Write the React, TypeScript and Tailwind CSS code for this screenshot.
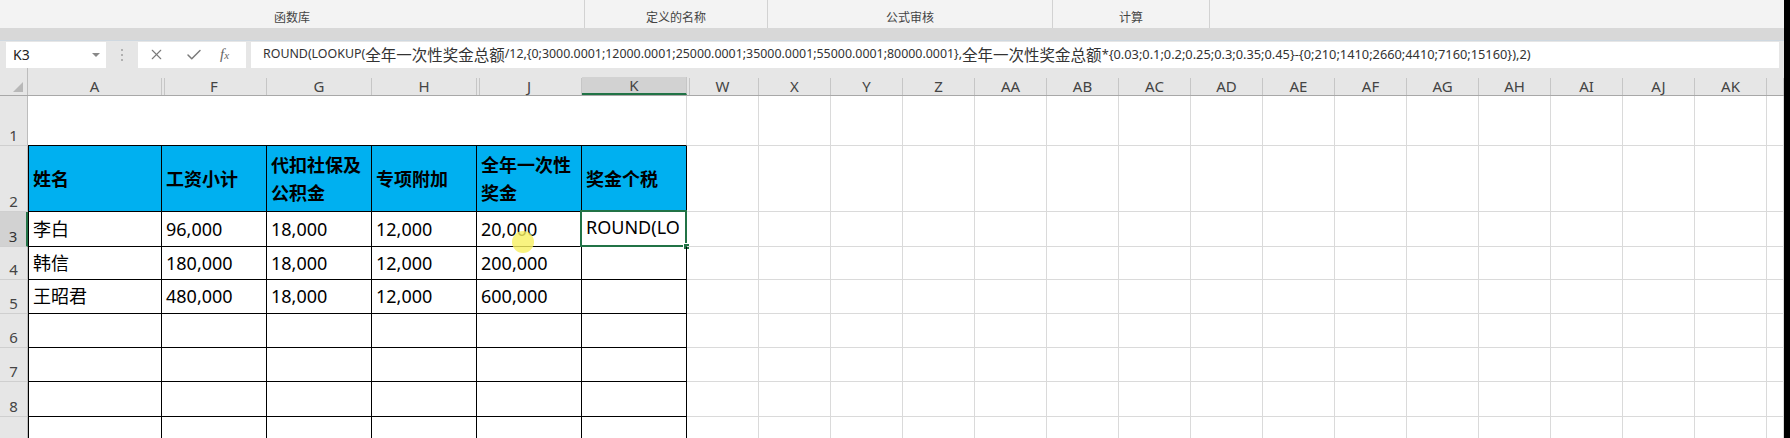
import React from 'react';
import { X, Check } from 'lucide-react';

type Col = { n: string; w: number; t: boolean; hiddenBefore?: boolean };

const cols: Col[] = [
  { n: 'A', w: 134, t: true },
  { n: 'F', w: 105, t: true, hiddenBefore: true },
  { n: 'G', w: 105, t: true },
  { n: 'H', w: 105, t: true },
  { n: 'J', w: 105, t: true, hiddenBefore: true },
  { n: 'K', w: 105, t: true },
  ...['W', 'X', 'Y', 'Z', 'AA', 'AB', 'AC', 'AD', 'AE', 'AF', 'AG', 'AH', 'AI', 'AJ', 'AK'].map((n, i) => ({
    n,
    w: 72,
    t: false,
    hiddenBefore: i === 0,
  })),
  { n: '', w: 17, t: false },
];

const headers: React.ReactNode[] = [
  '姓名',
  '工资小计',
  <>代扣社保及<br />公积金</>,
  '专项附加',
  <>全年一次性<br />奖金</>,
  '奖金个税',
];

const data: string[][] = [
  ['李白', '96,000', '18,000', '12,000', '20,000', ''],
  ['韩信', '180,000', '18,000', '12,000', '200,000', ''],
  ['王昭君', '480,000', '18,000', '12,000', '600,000', ''],
];

// row 9 is only partly in view, its number is below the edge
const rows = [
  { n: 1, h: 50 },
  { n: 2, h: 66 },
  { n: 3, h: 35 },
  { n: 4, h: 33 },
  { n: 5, h: 34 },
  { n: 6, h: 34 },
  { n: 7, h: 34 },
  { n: 8, h: 35 },
  { n: 9, h: 34 },
];

const formula: [string, string][] = [
  ['l', 'ROUND(LOOKUP('],
  ['c', '全年一次性奖金总额'],
  ['l', '/12,{0;3000.0001;12000.0001;25000.0001;35000.0001;55000.0001;80000.0001},'],
  ['c', '全年一次性奖金总额'],
  ['e', '*{0.03;0.1;0.2;0.25;0.3;0.35;0.45}-{0;210;1410;2660;4410;7160;15160}),2)'],
];

const groups = [
  { label: '函数库', w: 585 },
  { label: '定义的名称', w: 183 },
  { label: '公式审核', w: 285 },
  { label: '计算', w: 157 },
];

function Cell({ r, ci, col }: { r: number; ci: number; col: Col }) {
  let cls = 'border-r border-b border-[#dadada]';
  let content: React.ReactNode = null;
  if (col.t && r === 1) {
    cls = ci === 5 ? 'border-b border-b-black border-r border-r-[#dadada]' : 'border-b border-b-black';
  } else if (col.t && r >= 2) {
    cls = 'border-r border-b border-black' + (ci === 0 ? ' border-l' : '');
  }
  if (col.t && r === 2) {
    cls += ' bg-[#00b0f0] font-bold leading-[28px] items-center';
    content = headers[ci];
  } else if (col.t && r >= 3 && r <= 5) {
    cls += ' items-center';
    content = data[r - 3][ci];
  }
  const selected = r === 3 && ci === 5;
  return (
    <div
      className={`relative flex shrink-0 pl-[4px] text-[18px] text-black ${cls}`}
      style={{ width: col.w }}
    >
      {selected ? (
        <>
          <div className="whitespace-nowrap leading-[28px] -mt-[5px] self-center">ROUND(LO</div>
          <div className="absolute -left-[2px] -top-[2px] -right-[1px] -bottom-[1px] border-2 border-[#217346]" />
          <div className="absolute -right-[4px] -bottom-[4px] w-[7px] h-[7px] bg-[#217346] border border-white" />
        </>
      ) : (
        <div className="whitespace-nowrap">{content}</div>
      )}
    </div>
  );
}

export default function App() {
  return (
    <div className="relative w-[1790px] h-[438px] overflow-hidden flex bg-white font-['Noto_Sans','Noto_Sans_CJK_SC',sans-serif]">
      <div className="w-[1784px] flex flex-col">
        {/* ribbon group labels */}
        <div className="h-[28px] shrink-0 flex bg-[#f3f3f3] text-[12px] text-[#444]">
          {groups.map((g) => (
            <div key={g.label} className="flex items-end justify-center pb-[1px] border-r border-[#d2d2d2]" style={{ width: g.w }}>
              {g.label}
            </div>
          ))}
        </div>
        <div className="h-[12px] shrink-0 bg-[#d8d8d8]" />

        {/* formula bar */}
        <div className="h-[28px] shrink-0 flex items-center bg-[#e6e6e6] pl-[6px] border-t border-[#cfd8e0]">
          <div className="w-[100px] h-[26px] bg-white flex items-center justify-between pl-[7px] pr-[6px] text-[14px] text-[#222]">
            <span>K3</span>
            <span className="w-0 h-0 border-l-[4px] border-r-[4px] border-t-[4px] border-l-transparent border-r-transparent border-t-[#888]" />
          </div>
          <div className="w-[32px] flex flex-col items-center gap-[3px]">
            <span className="w-[2px] h-[2px] bg-[#b0b0b0]" />
            <span className="w-[2px] h-[2px] bg-[#b0b0b0]" />
            <span className="w-[2px] h-[2px] bg-[#b0b0b0]" />
          </div>
          <div className="w-[108px] h-[26px] bg-white flex items-center pl-[10px] text-[#7a7a7a]">
            <X size={17} strokeWidth={1.6} />
            <Check size={18} strokeWidth={2} className="ml-[20px]" />
            <span className="ml-[17px] italic font-['Liberation_Serif',serif] text-[15px] text-[#666]">
              f<span className="text-[11px]">x</span>
            </span>
          </div>
          <div className="ml-[5px] w-[1528px] h-[26px] bg-white flex items-center pl-[12px] whitespace-nowrap text-[#333] overflow-hidden">
            {formula.map(([k, s], i) => (
              <span
                key={i}
                className={
                  k === 'c'
                    ? "text-[15.5px] font-['Noto_Sans_CJK_SC',sans-serif]"
                    : k === 'e'
                    ? 'text-[12.8px]'
                    : 'text-[12.4px]'
                }
              >
                {s}
              </span>
            ))}
          </div>
        </div>

        {/* column headers */}
        <div className="h-[28px] shrink-0 flex bg-[#e6e6e6] border-b border-[#a8a8a8] text-[15px] text-[#444]">
          <div className="w-[28px] shrink-0 relative border-r border-[#bdbdbd]">
            <span className="absolute right-[4px] bottom-[3px] w-0 h-0 [border-bottom:10px_solid_#b8b8b8] [border-left:10px_solid_transparent]" />
          </div>
          {cols.map((c) => (
            <div
              key={c.n + c.w}
              className={`relative shrink-0 self-end h-[17px] leading-[17px] text-center border-r border-[#c6c6c6] ${
                c.n === 'K' ? 'bg-[#d2d2d2] h-[18px] border-b-2 border-b-[#217346]' : ''
              }`}
              style={{ width: c.w }}
            >
              {c.hiddenBefore && <span className="absolute left-[2px] top-0 bottom-0 w-px bg-[#c6c6c6]" />}
              {c.n}
            </div>
          ))}
        </div>

        {/* grid */}
        {rows.map((r) => (
          <div key={r.n} className="flex shrink-0" style={{ height: r.h }}>
            <div
              className={`w-[28px] shrink-0 flex items-end justify-center text-[15px] leading-[18px] pb-[1px] border-b border-[#cfcfcf] ${
                r.n === 3 ? 'bg-[#d2d2d2] border-r-2 border-r-[#217346] text-[#333]' : 'bg-[#e6e6e6] border-r border-r-[#bdbdbd] text-[#444]'
              }`}
            >
              {r.n < 9 ? r.n : null}
            </div>
            {cols.map((c, ci) => (
              <Cell key={c.n + ci} r={r.n} ci={ci} col={c} />
            ))}
          </div>
        ))}
      </div>
      <div className="w-[6px] shrink-0 bg-black" />

      {/* mouse highlight */}
      <div className="absolute left-[512px] top-[231px] w-[22px] h-[22px] rounded-full bg-[#f8f060] opacity-80" />
    </div>
  );
}
